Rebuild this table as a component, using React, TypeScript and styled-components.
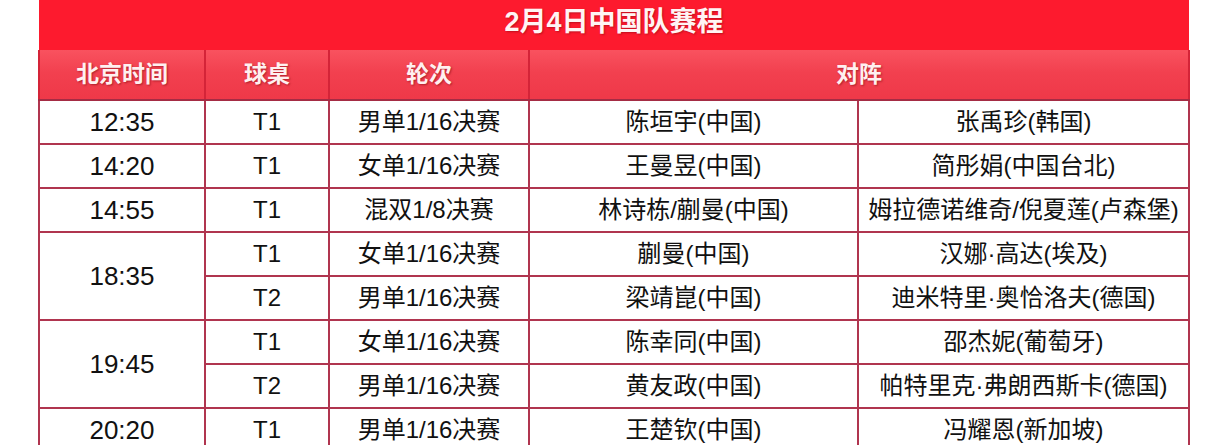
import styled, { createGlobalStyle } from 'styled-components';

type Match = {
    table: string;
    round: string;
    home: string;
    away: string;
};

type Slot = {
    time: string;
    matches: Match[];
};

const schedule: Slot[] = [
    {time: '12:35', matches: [
        {table: 'T1', round: '男单1/16决赛', home: '陈垣宇(中国)', away: '张禹珍(韩国)'},
    ]},
    {time: '14:20', matches: [
        {table: 'T1', round: '女单1/16决赛', home: '王曼昱(中国)', away: '简彤娟(中国台北)'},
    ]},
    {time: '14:55', matches: [
        {table: 'T1', round: '混双1/8决赛', home: '林诗栋/蒯曼(中国)', away: '姆拉德诺维奇/倪夏莲(卢森堡)'},
    ]},
    {time: '18:35', matches: [
        {table: 'T1', round: '女单1/16决赛', home: '蒯曼(中国)', away: '汉娜·高达(埃及)'},
        {table: 'T2', round: '男单1/16决赛', home: '梁靖崑(中国)', away: '迪米特里·奥恰洛夫(德国)'},
    ]},
    {time: '19:45', matches: [
        {table: 'T1', round: '女单1/16决赛', home: '陈幸同(中国)', away: '邵杰妮(葡萄牙)'},
        {table: 'T2', round: '男单1/16决赛', home: '黄友政(中国)', away: '帕特里克·弗朗西斯卡(德国)'},
    ]},
    {time: '20:20', matches: [
        {table: 'T1', round: '男单1/16决赛', home: '王楚钦(中国)', away: '冯耀恩(新加坡)'},
    ]},
];

const App = (): JSX.Element => {
    return(
        <>
            <GlobalStyle />
            <Page>
                <Schedule>
                    <colgroup>
                        <col style={{width: '166px'}} />
                        <col style={{width: '124px'}} />
                        <col style={{width: '200px'}} />
                        <col style={{width: '329px'}} />
                        <col style={{width: '331px'}} />
                    </colgroup>
                    <thead>
                        <TitleRow>
                            <Title colSpan={5}>2月4日中国队赛程</Title>
                        </TitleRow>
                        <HeadRow>
                            <HeadCell>北京时间</HeadCell>
                            <HeadCell>球桌</HeadCell>
                            <HeadCell>轮次</HeadCell>
                            <HeadCell colSpan={2}>对阵</HeadCell>
                        </HeadRow>
                    </thead>
                    <tbody>
                        {schedule.map((slot) => slot.matches.map((m, i) => (
                            <Row key={slot.time + m.table}>
                                {i == 0 && (
                                    <Cell $time rowSpan={slot.matches.length}>{slot.time}</Cell>
                                )}
                                <Cell>{m.table}</Cell>
                                <Cell>{m.round}</Cell>
                                <Cell>{m.home}</Cell>
                                <Cell>{m.away}</Cell>
                            </Row>
                        )))}
                    </tbody>
                </Schedule>
            </Page>
        </>
    );
};

const GlobalStyle = createGlobalStyle`
    body {
        background: #ffffff;
        margin: 0;
    }
`;

const Page = styled.div`
    font-family: 'Liberation Sans', 'Noto Sans CJK SC', sans-serif;
    padding-left: 38px;
`;

const Schedule = styled.table`
    border-collapse: collapse;
    table-layout: fixed;
    width: 1152px;
`;

const TitleRow = styled.tr`
    height: 50px;
`;

const Title = styled.th`
    background: #fd1a2e;
    color: #fff4f4;
    font-size: 27px;
    font-weight: bold;
    line-height: 1;
    padding: 0 0 6px;
    text-align: center;
    text-shadow: 1px 1px 2px rgba(120, 0, 10, 0.45);
`;

const HeadRow = styled.tr`
    background: linear-gradient(180deg, #f9525f 0%, #f2404f 45%, #ef3848 100%);
    height: 50px;
`;

const HeadCell = styled.th`
    border-bottom: 2px solid #a52c44;
    border-left: 2px solid #d42438;
    border-right: 2px solid #d42438;
    color: #fff0f0;
    font-size: 23px;
    font-weight: bold;
    line-height: 1;
    padding: 0;
    text-align: center;
    text-shadow: 1px 1px 2px rgba(110, 0, 10, 0.5);
`;

const Row = styled.tr`
    height: 44px;
`;

const Cell = styled.td<{ $time?: boolean }>`
    border: 2px solid #b0354f;
    color: #111111;
    font-size: ${(p) => p.$time ? '26px' : '24px'};
    line-height: 1;
    padding: 0;
    text-align: center;
    vertical-align: middle;
    white-space: nowrap;
`;

export default App;
